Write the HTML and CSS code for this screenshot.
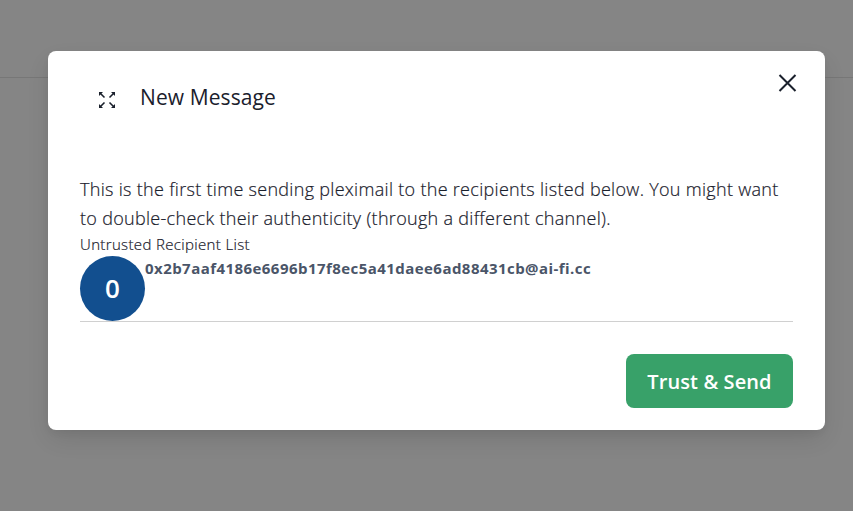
FILE: index.html
```html
<!DOCTYPE html>
<html lang="en">

<head>
    <meta charset="UTF-8">
    <meta name="viewport" content="width=device-width, initial-scale=1.0">
    <title>New Message</title>
    <link rel="stylesheet" href="styles.css">
</head>

<body>
    <div class="page-header"></div>

    <div class="overlay">
        <section class="modal" role="dialog" aria-labelledby="modal-title">
            <button class="close-btn" aria-label="Close">
                <svg viewBox="0 0 18 18" width="18" height="18">
                    <path d="M1.5 1L17.5 17M17.5 1L1.5 17" />
                </svg>
            </button>

            <header class="modal-header">
                <svg class="expand-icon" viewBox="0 0 16 16" width="16" height="16">
                    <path class="arrow-heads" d="M0 0H4L0 4ZM16 0V4L12 0ZM0 16V12L4 16ZM16 16H12L16 12Z" />
                    <path d="M1.5 1.5L5.5 5.5M14.5 1.5L10.5 5.5M1.5 14.5L5.5 10.5M14.5 14.5L10.5 10.5" />
                </svg>
                <h1 id="modal-title">New Message</h1>
            </header>

            <div class="modal-body">
                <p class="notice">This is the first time sending pleximail to the recipients listed below. You might want<br>
                    to double-check their authenticity (through a different channel).</p>
                <h2>Untrusted Recipient List</h2>
                <div class="recipient">
                    <span class="avatar">0</span>
                    <strong class="address">0x2b7aaf4186e6696b17f8ec5a41daee6ad88431cb@ai-fi.cc</strong>
                </div>
            </div>

            <footer class="modal-footer">
                <button class="send-btn">Trust &amp; Send</button>
            </footer>
        </section>
    </div>
</body>

</html>
```

FILE: styles.css
```css
* {
    margin: 0;
    padding: 0;
    box-sizing: border-box;
}

body {
    height: 100vh;
    overflow: hidden;
    background: #858585;
    color: #1a202c;
    font-family: "Open Sans", "Noto Sans", sans-serif;
}

.page-header {
    height: 78px;
    border-bottom: 1px solid #777;
}

.overlay {
    position: absolute;
    inset: 0;
    padding: 51px 28px 0 48px;
}

.modal {
    position: relative;
    height: 379px;
    padding: 32px;
    background: #fff;
    border-radius: 8px;
    box-shadow: 0 10px 25px -3px rgba(0, 0, 0, 0.12), 0 4px 10px -2px rgba(0, 0, 0, 0.05);
}

button {
    border: 0;
    background: none;
    font-family: inherit;
}

.close-btn {
    position: absolute;
    top: 23px;
    right: 29px;
    width: 18px;
    height: 18px;
}

svg {
    display: block;
    overflow: visible;
    fill: none;
    stroke: #1a202c;
    stroke-width: 2;
}

.modal-header {
    display: flex;
    align-items: center;
    height: 28px;
    padding-left: 19px;
}

.expand-icon {
    margin: 5px 25px 0 0;
    stroke-width: 1.6;
}

.arrow-heads {
    fill: #1a202c;
    stroke: none;
}

h1 {
    font-size: 21px;
    font-weight: 500;
    line-height: 28px;
    letter-spacing: 0.1px;
}

.modal-body {
    margin-top: 64px;
}

.notice {
    font-size: 18px;
    font-weight: 300;
    line-height: 29px;
    letter-spacing: 0.3px;
    -webkit-text-stroke: 0.2px #1a202c;
}

h2 {
    font-size: 15px;
    font-weight: 300;
    line-height: 23px;
    letter-spacing: 0.35px;
    -webkit-text-stroke: 0.2px #1a202c;
}

.recipient {
    display: flex;
    height: 66px;
    border-bottom: 1px solid #d0d0d0;
}

.avatar {
    width: 65px;
    height: 65px;
    border-radius: 50%;
    background: #124f8f;
    color: #fff;
    font-size: 26px;
    font-weight: 600;
    line-height: 65px;
    text-align: center;
}

.address {
    color: #4a5568;
    font-size: 15px;
    line-height: 24px;
    letter-spacing: 0.45px;
}

.modal-footer {
    display: flex;
    justify-content: flex-end;
    margin-top: 32px;
}

.send-btn {
    width: 167px;
    height: 54px;
    border-radius: 8px;
    background: #38a169;
    color: #fff;
    font-size: 20px;
    font-weight: 600;
    letter-spacing: 0.1px;
}
```
